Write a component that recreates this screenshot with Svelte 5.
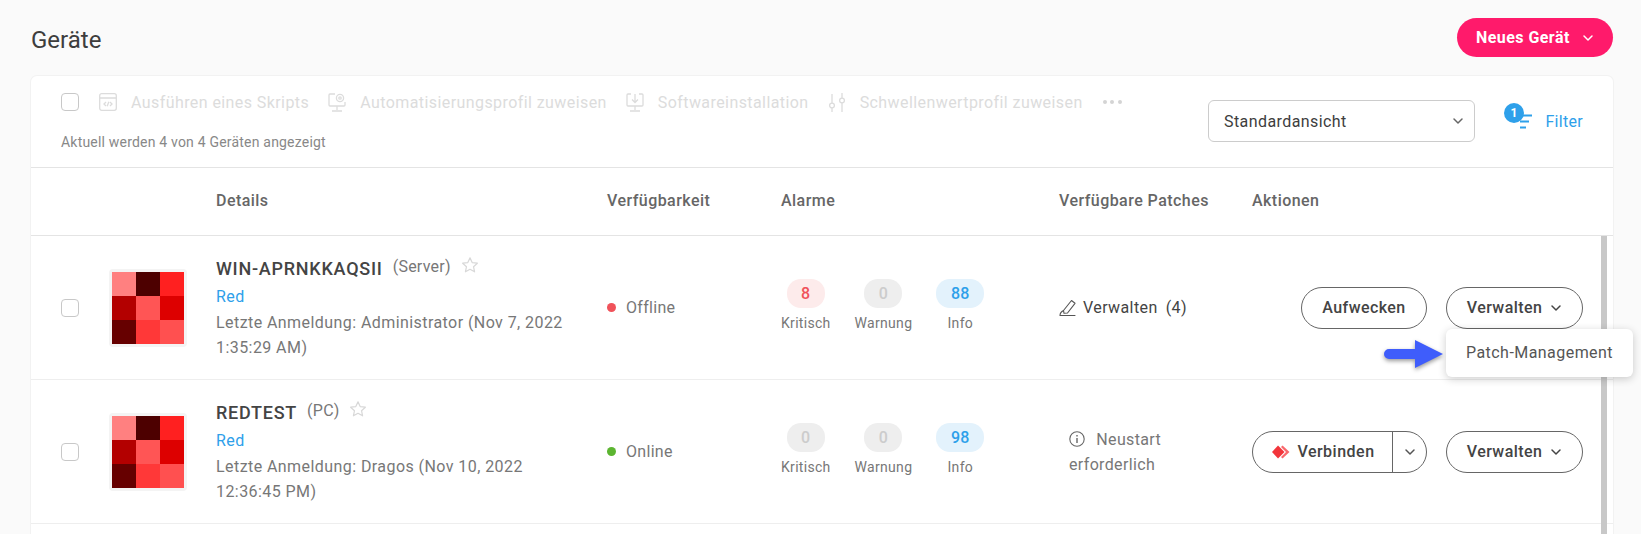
<script>
  const cells = ['#ff8080','#4d0000','#ff2020','#b30000','#ff5555','#dd0000','#660000','#ff3838','#ff5050'];
  const devices = [
    { name: 'WIN-APRNKKAQSII', type: '(Server)', login: 'Letzte Anmeldung: Administrator (Nov 7, 2022 1:35:29 AM)', status: 'Offline', crit: 8, info: 88, online: false },
    { name: 'REDTEST', type: '(PC)', login: 'Letzte Anmeldung: Dragos (Nov 10, 2022 12:36:45 PM)', status: 'Online', crit: 0, info: 98, online: true }
  ];
</script>

{#snippet chevron(c)}
  <svg class="chev" width="12" height="8" viewBox="0 0 12 8" fill="none" stroke={c} stroke-width="1.5" stroke-linecap="round" stroke-linejoin="round"><path d="M2 2l4 4 4-4"/></svg>
{/snippet}

<div class="page">
  <header class="top">
    <h1>Geräte</h1>
    <button class="primary">Neues Gerät {@render chevron('#fff')}</button>
  </header>

  <section class="card">
    <div class="toolbar">
      <div class="tool-left">
        <div class="actions-row">
          <span class="box"></span>
          <span class="act first">
            <svg width="18" height="18" viewBox="0 0 18 18" fill="none" stroke="#dcdcdc" stroke-width="1.3"><rect x=".7" y=".7" width="16.6" height="16.6" rx="2"/><path d="M1 5h16M7 9l-2 2 2 2M11 9l2 2-2 2M9.8 8.8l-1.6 4.4"/></svg>
            Ausführen eines Skripts
          </span>
          <span class="act a2">
            <svg width="18" height="19" viewBox="0 0 18 19" fill="none" stroke="#dcdcdc" stroke-width="1.3"><path d="M7 1H2a1 1 0 0 0-1 1v10a1 1 0 0 0 1 1h14a1 1 0 0 0 1-1V9M9 13v4M4 18h10"/><circle cx="12" cy="5" r="3.6"/><circle cx="12" cy="5" r="1.2"/></svg>
            Automatisierungsprofil zuweisen
          </span>
          <span class="act a3">
            <svg width="18" height="19" viewBox="0 0 18 19" fill="none" stroke="#dcdcdc" stroke-width="1.3"><path d="M5 1H2a1 1 0 0 0-1 1v10a1 1 0 0 0 1 1h14a1 1 0 0 0 1-1V2a1 1 0 0 0-1-1h-3M9 13v4M4 18h10M9 1v8M6 6.5L9 9.5l3-3"/></svg>
            Softwareinstallation
          </span>
          <span class="act a4">
            <svg width="18" height="19" viewBox="0 0 18 19" fill="none" stroke="#dcdcdc" stroke-width="1.3"><path d="M4 1v9M4 15v4M14 0v5M14 10v9"/><circle cx="4" cy="12.5" r="2.4"/><circle cx="14" cy="7.5" r="2.4"/></svg>
            Schwellenwertprofil zuweisen
          </span>
          <span class="dots"><i></i><i></i><i></i></span>
        </div>
        <p class="count">Aktuell werden 4 von 4 Geräten angezeigt</p>
      </div>
      <div class="select">Standardansicht {@render chevron('#666')}</div>
      <div class="filter">
        <span class="fico">
          <svg width="14" height="16" viewBox="0 0 14 16" fill="none" stroke="#2ea0ea" stroke-width="2"><path d="M1 1.500h12M1 7.500h9M1 13.500h6"/></svg>
          <b>1</b>
        </span>
        Filter
      </div>
    </div>

    <div class="grid head">
      <span></span><span></span>
      <span>Details</span><span>Verfügbarkeit</span><span>Alarme</span><span>Verfügbare Patches</span><span>Aktionen</span>
    </div>

    {#each devices as d, i}
      <div class="grid row">
        <span class="box chk"></span>
        <div class="avatar">
          {#each cells as c}<i style="background:{c}"></i>{/each}
        </div>
        <div class="details">
          <div class="nameline">
            <strong>{d.name}</strong><span class="type">{d.type}</span>
            <svg class="star" width="18" height="18" viewBox="0 0 24 24" fill="none" stroke="#d8d8d8" stroke-width="1.6" stroke-linejoin="round"><path d="M12 2.5l2.9 6.3 6.9.8-5.1 4.7 1.4 6.8-6.1-3.4-6.1 3.4 1.4-6.8L2.200 9.600l6.900-.8z"/></svg>
          </div>
          <a href="#red" class="group">Red</a>
          <p class="login">{d.login}</p>
        </div>
        <div class="status"><i class:on={d.online}></i>{d.status}</div>
        <div class="alarms">
          <div class="alarm a-crit"><b class:crit={d.crit > 0}>{d.crit}</b><span>Kritisch</span></div>
          <div class="alarm a-warn"><b>0</b><span>Warnung</span></div>
          <div class="alarm a-info"><b class="inf">{d.info}</b><span>Info</span></div>
        </div>
        {#if i === 0}
          <div class="patch">
            <svg width="18" height="18" viewBox="0 0 18 18" fill="none" stroke="#555" stroke-width="1.1" stroke-linejoin="round" stroke-linecap="round"><path d="M4.500 11.500L12.500 1.500l3.500 2.800-7.500 9.700-3.500.3zM4.500 11.500C2.500 12.500 1 14.500 1 16.500h15"/></svg>
            <span>Verwalten</span><span class="num">(4)</span>
          </div>
        {:else}
          <div class="restart">
            <svg width="16" height="16" viewBox="0 0 16 16" fill="none" stroke="#666" stroke-width="1.1"><circle cx="8" cy="8" r="7.200"/><path d="M8 7v5M8 4v1.500" stroke-width="1.400"/></svg>
            <span class="nst">Neustart</span> erforderlich
          </div>
        {/if}
        <div class="acts">
          {#if i === 0}
            <button class="ghost wake">Aufwecken</button>
          {:else}
            <div class="split">
              <button class="conn">
                <svg width="18" height="14" viewBox="0 0 18 14"><path d="M0 7l6-6.500L12.500 7 6 13.500z" fill="#f2353b"/><path d="M10.500.500L17.500 7l-7 6.500L9 12l5-5-5-5z" fill="#f9686c"/></svg>
                Verbinden
              </button>
              <button class="drop">{@render chevron('#555')}</button>
            </div>
          {/if}
          <div class="manage">
            <button class="ghost mg">Verwalten {@render chevron('#444')}</button>
            {#if i === 0}
              <div class="menu">Patch-Management</div>
              <svg class="arrow" width="59" height="30" viewBox="0 0 59 30"><path d="M5 10h26V1l28 14-28 14V20H5a5 5 0 0 1 0-10z" fill="#3f5dfb"/></svg>
            {/if}
          </div>
        </div>
      </div>
    {/each}
    <div class="scroll"></div>
  </section>
</div>

<style>
  :global(body) { margin: 0; background: #fafafa; overflow: hidden; }
  * { box-sizing: border-box; }
  .page { height: 534px; overflow: hidden; font-family: Roboto, sans-serif; color: #444; padding: 18px 28px 0 31px; }
  .top { display: flex; justify-content: space-between; align-items: center; height: 39px; margin-bottom: 19px; }
  h1 { margin: 5px 0 0; font-size: 24px; font-weight: 400; color: #3d3d3d; }
  button { font-family: inherit; background: none; cursor: pointer; }
  .primary { width: 156px; height: 39px; border: 0; border-radius: 20px; background: #ff1a6b; color: #fff; font-size: 16px; font-weight: 700; letter-spacing: .45px; display: flex; align-items: center; justify-content: flex-start; padding: 0 0 0 19px; gap: 12px; }
  .card { position: relative; background: #fff; border-radius: 6px 6px 0 0; box-shadow: 0 0 0 1px #f2f2f2; height: 460px; }
  .toolbar { display: flex; height: 92px; border-bottom: 1px solid #e4e4e4; padding: 17px 30px 0 30px; }
  .tool-left { flex: 1; }
  .actions-row { display: flex; align-items: center; height: 18px; font-size: 16px; letter-spacing: .42px; color: #dcdcdc; }
  .box { display: block; flex: none; width: 18px; height: 18px; border: 1px solid #c8c8c8; border-radius: 4px; background: #fff; }
  .act { display: flex; align-items: center; gap: 14px; white-space: nowrap; }
  .act.first { margin-left: 20px; }
  .a2 { margin-left: 19px; }
  .a3 { margin-left: 19px; }
  .a4 { margin-left: 19px; }
  .dots { display: flex; gap: 3.500px; margin-left: 20px; }
  .dots i { width: 4px; height: 4px; border-radius: 50%; background: #d4d4d4; }
  .count { margin: 23px 0 0; font-size: 14px; letter-spacing: .2px; line-height: 16px; color: #888; }
  .select { width: 267px; height: 42px; margin-top: 7px; border: 1px solid #ccc; border-radius: 6px; display: flex; align-items: center; justify-content: space-between; padding: 0 10px 0 15px; font-size: 16px; letter-spacing: .42px; color: #3d3d3d; }
  .filter { position: relative; display: flex; align-items: center; height: 42px; margin-top: 7px; margin-left: 29px; width: 79px; justify-content: flex-end; font-size: 16px; letter-spacing: .3px; color: #2ea0ea; }
  .fico { position: absolute; left: 0; top: 3px; width: 30px; height: 26px; }
  .fico svg { position: absolute; left: 15px; top: 11px; }
  .fico b { position: absolute; left: 0; top: 0; width: 20px; height: 20px; border-radius: 50%; background: #2ea0ea; color: #fff; font-size: 12px; line-height: 20px; text-align: center; }
  .grid { display: grid; grid-template-columns: 78px 107px 391px 174px 278px 193px 361px; align-items: center; }
  .head { height: 68px; padding-bottom: 2px; border-bottom: 1px solid #e4e4e4; font-size: 16px; letter-spacing: .45px; font-weight: 500; color: #666; }
  .row { height: 144px; border-bottom: 1px solid #eee; }
  .chk { margin-left: 30px; }
  .avatar { width: 78px; height: 78px; border: 3px solid #f4f4f4; border-radius: 4px; display: grid; grid-template-columns: repeat(3, 24px); grid-auto-rows: 24px; }
  .details { padding-top: 1px; font-size: 16px; letter-spacing: .43px; line-height: 25.5px; color: #777; }
  .nameline { display: flex; align-items: center; height: 26px; margin-bottom: 3px; }
  .nameline strong { font-size: 18px; letter-spacing: .75px; font-weight: 500; color: #444; }
  .type { margin: 0 10px 4px; font-size: 16px; letter-spacing: .25px; color: #777; }
  .star { margin-bottom: 6px; }
  .group { display: block; color: #2ea0ea; text-decoration: none; }
  .login { margin: 0; width: 350px; }
  .status { display: flex; align-items: center; gap: 10px; font-size: 16px; letter-spacing: .3px; color: #777; }
  .status i { width: 9px; height: 9px; border-radius: 50%; background: #f0525a; }
  .status i.on { background: #5cb531; }
  .alarms { display: flex; align-items: flex-start; margin-bottom: 3px; }
  .alarm { display: flex; flex-direction: column; align-items: center; font-size: 14px; letter-spacing: .3px; color: #777; }
  .a-warn { margin-left: 24px; }
  .a-info { margin-left: 24px; width: 48px; }
  .alarm b { min-width: 38px; height: 29px; padding: 0 12px; border-radius: 14px; background: #eee; color: #ccc; font-size: 16px; font-weight: 500; line-height: 29px; text-align: center; margin-bottom: 5px; }
  .alarm span { line-height: 20px; white-space: nowrap; }
  .alarm b.crit { background: #fdebeb; color: #f0525a; }
  .alarm b.inf { width: 48px; background: #e3f2fc; color: #2ea0ea; }
  .patch { display: flex; align-items: center; font-size: 16px; letter-spacing: .4px; color: #444; gap: 6px; }
  .num { margin-left: 2px; }
  .restart { padding-left: 10px; width: 130px; font-size: 16px; letter-spacing: .35px; line-height: 25px; color: #777; }
  .restart svg { vertical-align: -2px; }
  .nst { margin-left: 7px; }
  .acts { display: flex; justify-content: flex-end; align-items: center; gap: 19px; padding-right: 30px; }
  .ghost, .split { height: 42px; border: 1px solid #666; border-radius: 21px; font-size: 16px; letter-spacing: .42px; font-weight: 500; color: #444; }
  .wake { width: 126px; }
  .mg { width: 137px; display: flex; align-items: center; gap: 8px; justify-content: center; padding: 0; }
  .manage { position: relative; }
  .menu { position: absolute; left: 0; top: 42px; width: 187px; height: 48px; background: #fff; border-radius: 6px; box-shadow: 0 2px 8px rgba(0,0,0,.2); font-size: 16px; letter-spacing: .45px; font-weight: 400; line-height: 48px; padding-left: 20px; color: #555; z-index: 3; white-space: nowrap; }
  .arrow { position: absolute; left: -62px; top: 52px; z-index: 3; filter: drop-shadow(0 2px 2px rgba(0,0,0,.4)); }
  .split { display: flex; width: 175px; }
  .conn { flex: 1; border: 0; border-right: 1px solid #666; display: flex; align-items: center; justify-content: center; gap: 7px; padding: 0 0 0 2px; font-size: 16px; letter-spacing: .5px; font-weight: 500; color: #444; }
  .drop { width: 33px; border: 0; padding: 0; display: flex; align-items: center; justify-content: center; }
  .scroll { position: absolute; left: 1570px; top: 160px; bottom: 0; width: 6px; background: #c8c8c8; z-index: 2; }
</style>
